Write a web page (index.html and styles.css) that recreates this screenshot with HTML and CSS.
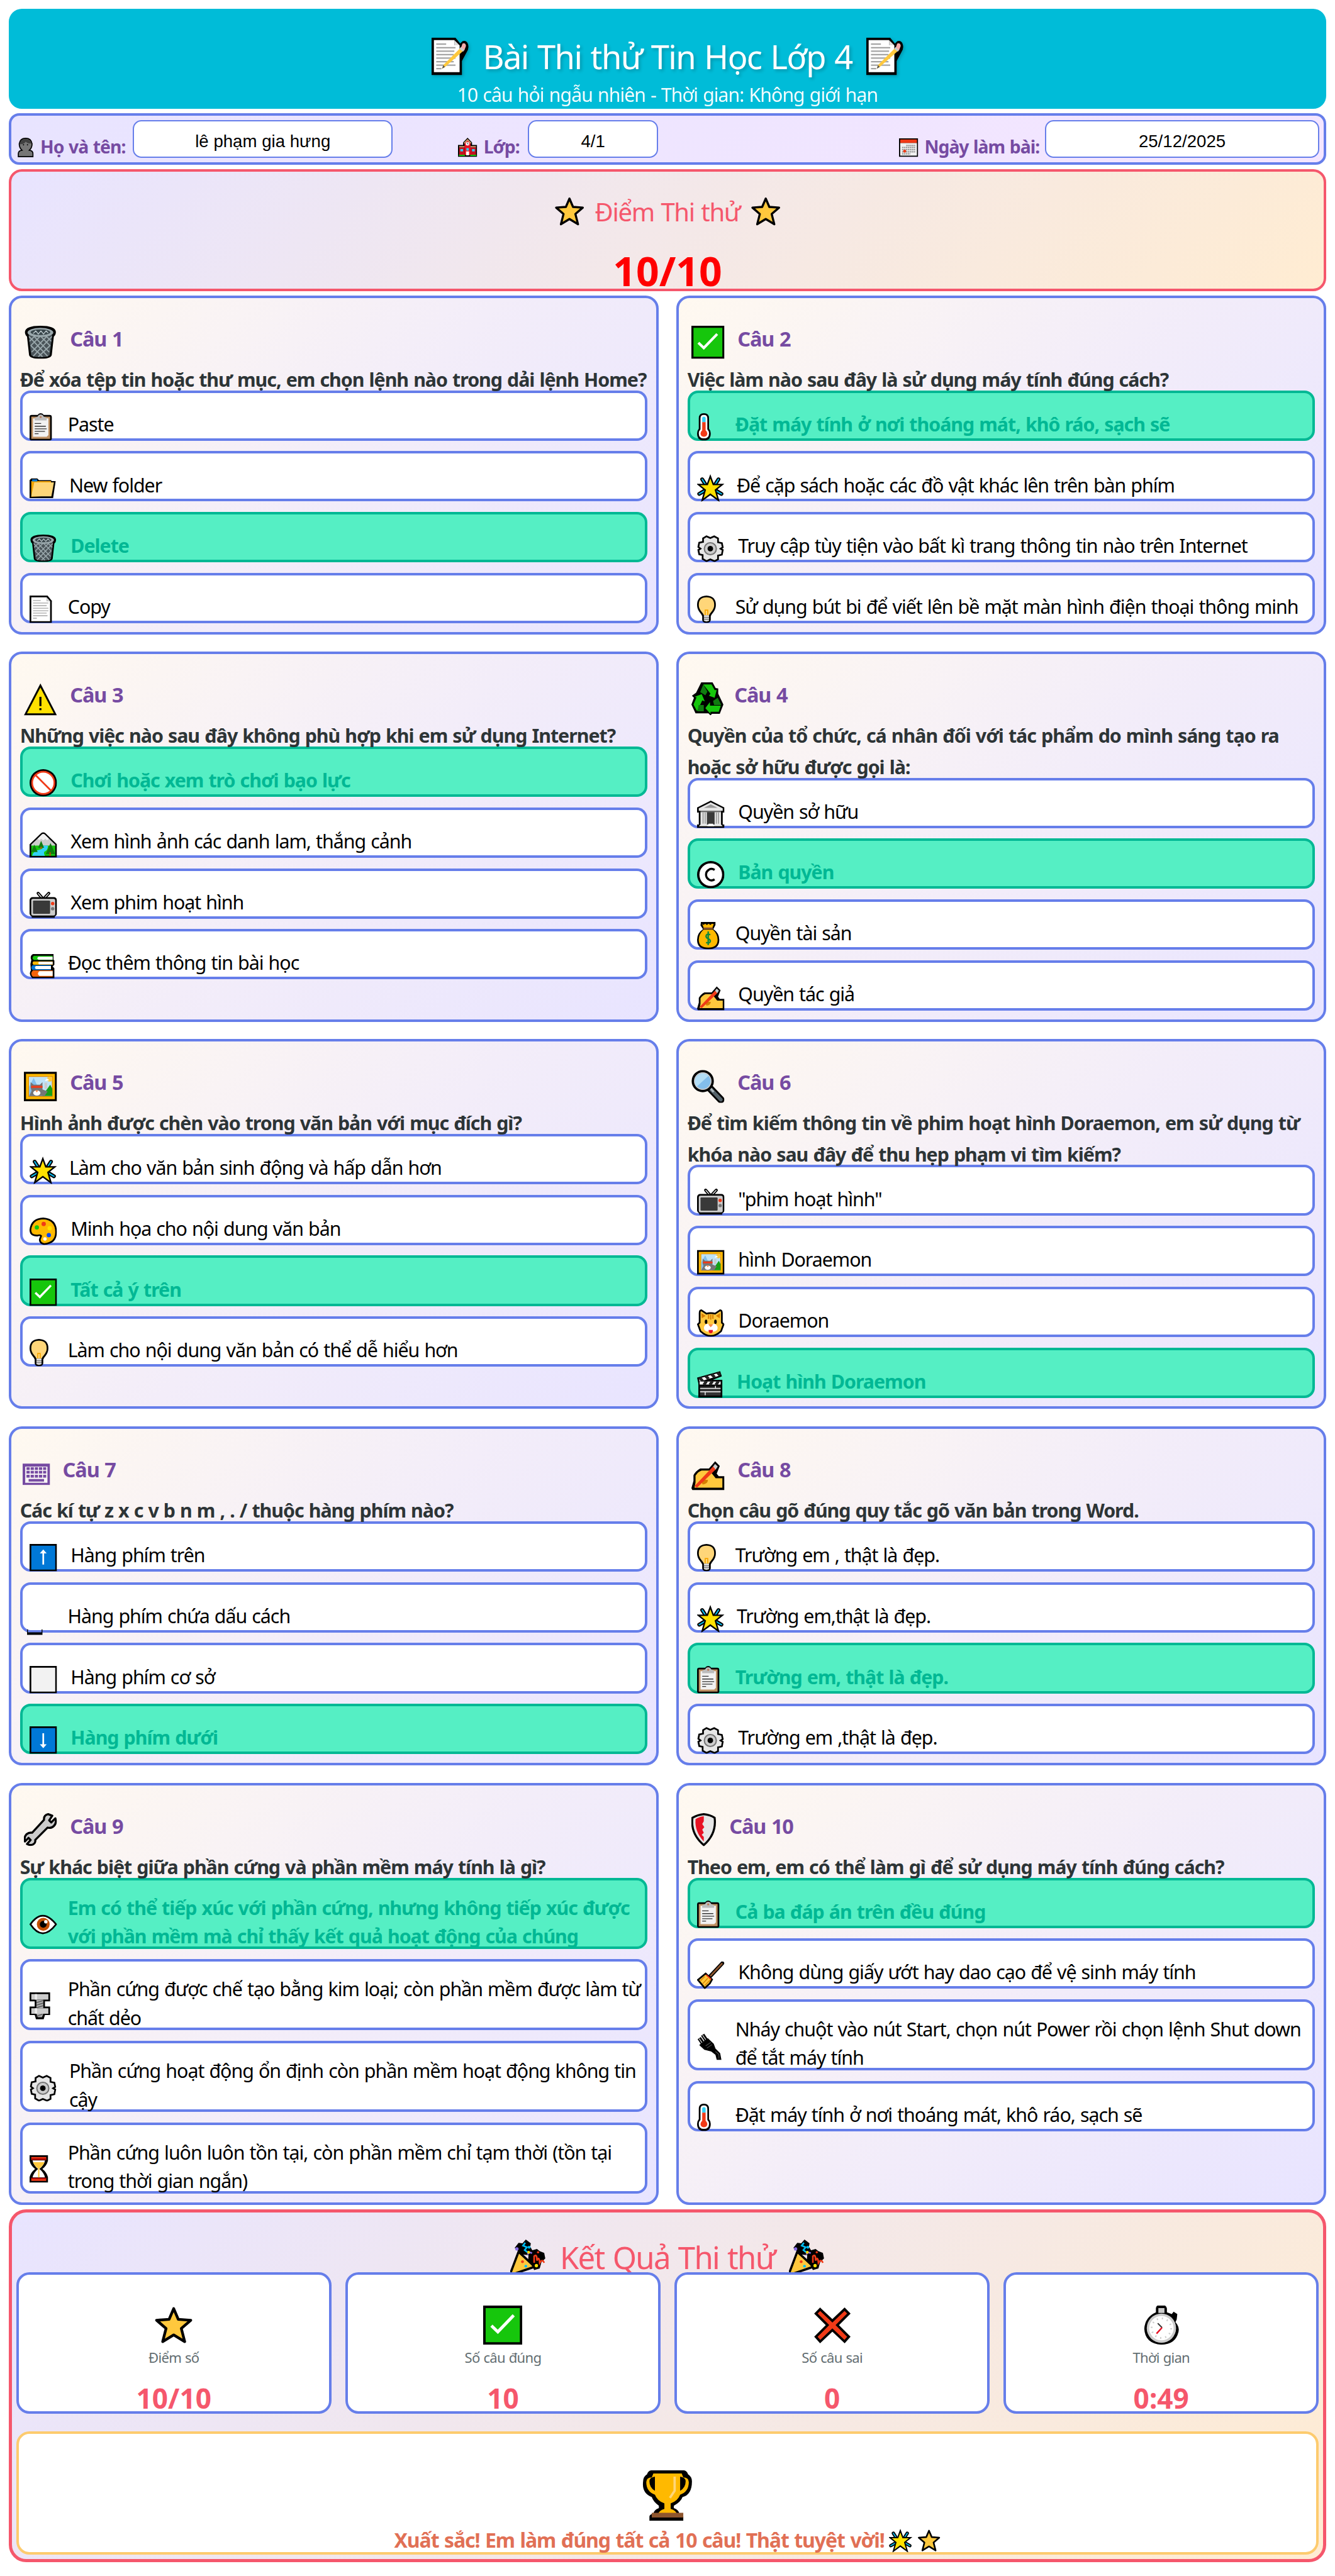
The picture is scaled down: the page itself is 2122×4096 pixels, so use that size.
FILE: index.html
```html
<!DOCTYPE html>
<html lang="vi">

<head>
  <meta charset="UTF-8" />
  <meta name="viewport" content="width=device-width, initial-scale=1.0" />
  <title>Bài Thi thử Tin Học Lớp 4</title>
  <link rel="stylesheet" href="styles.css">
</head>

<body>
  <!-- icon -->
  <svg class="sprite" aria-hidden="true">
    <symbol id="memo" viewBox="0 0 64 64">
      <path d="M0 0h41l8 10 4-4q6-2 9 4 3 8-2 15L52 40v24H0z" />
      <path d="M4 4h35v9h9v46H4z" fill="#fff" /><path d="M39 4l9 9h-9z" fill="#ddd" />
      <path d="M8 11h17M8 17h33M8 23h31M8 29h30M8 35h33M8 41h30M8 47h33M8 53h9" stroke="#a5a5a5" stroke-width="2.4" />
      <path d="M50 17l6 4-33 29-5 3 2-6z" fill="#ffc83d" /><path d="M18 53l2-6 3 3z" fill="#555" />
      <path d="M53 10q5-2 6 4l-3 8-6-4z" fill="#f4abab" /><path d="M50 16l6 5-2 3-6-5z" fill="#ccc" />
    </symbol>
    <symbol id="star" viewBox="0 0 64 64">
      <path d="M32 5l7.500 17.500L60 24 44.500 37.500 50 59 32 48 14 59l5.500-21.500L4 24l20.500-1.500z" fill="#ffc83d" stroke="#000" stroke-width="4.500" stroke-linejoin="round" />
    </symbol>
    <symbol id="person" viewBox="0 0 52 64">
      <path d="M2 62V52q0-9 12-11Q5 33 5 20 8 2 26 2t21 18q0 13-9 21 12 2 12 11v10z" fill="#767676" stroke="#000" stroke-width="3.500" />
      <path d="M7 21Q8 4 26 4q15 0 19 15-12 1-19-6-5 9-19 8z" fill="#404040" />
      <circle cx="19" cy="23" r="2" /><circle cx="32" cy="23" r="2" />
    </symbol>
    <symbol id="school" viewBox="0 0 64 64">
      <path d="M32 0l15 16v8h17v40H0V24h17v-8z" /><path d="M32 5l10 13v40H22V18z" fill="#e81224" />
      <path d="M32 4l13 13-3 3-10-10-10 10-3-3z" fill="#c89a6c" />
      <path d="M4 32h18v26H4zM42 32h18v26H42z" fill="#c50f1f" /><path d="M4 28h18v4H4zM42 28h18v4H42z" fill="#c89a6c" />
      <circle cx="32" cy="20" r="6" fill="#fff" /><path d="M32 16v5h3" fill="none" stroke="#000" stroke-width="1.500" />
      <path d="M8 38h9v8H8zM47 38h9v8h-9zM28 35h8v8h-8z" fill="#31d2f7" /><path d="M27 46h10v13H27z" fill="#fff" />
      <path d="M3 57h20v4H3zM41 57h20v4H41z" fill="#16c60c" />
    </symbol>
    <symbol id="calendar" viewBox="0 0 64 64">
      <path d="M0 2h64v62H0z" /><path d="M4 6h56v12H4z" fill="#f03a17" /><path d="M4 18h56v42H4z" fill="#f2f2f2" />
      <path d="M24 26h30M10 33h44M10 40h44M10 47h44M10 54h28" stroke="#999" stroke-width="4.500" stroke-dasharray="5 1.500" />
      <circle cx="19" cy="45" r="5" fill="#f03a17" />
    </symbol>
    <symbol id="trash" viewBox="0 0 64 64">
      <path d="M2 12Q3 0 32 0t30 12q0 6-4 9l-4 36q-2 7-22 7t-22-7L6 21q-4-3-4-9z" />
      <path d="M9 18l5 39q4 4 18 4t18-4l5-39z" fill="#4a5459" />
      <path d="M10 21l36 38M20 21l29 30M33 21l18 18M44 21l9 9M54 21L18 59M44 21L15 51M31 21L13 39M20 21L11 30M28 60l22-21M36 60L14 39" stroke="#9ba9ad" stroke-width="2.200" />
      <ellipse cx="32" cy="13" rx="25" ry="9" fill="#9ba9ad" /><ellipse cx="32" cy="12.500" rx="19" ry="5.500" fill="#39464b" />
      <path d="M18 15l5-5 5 6 5-6 5 6 5-6 4 4" fill="none" stroke="#c0cdd1" stroke-width="1.600" />
    </symbol>
    <symbol id="check" viewBox="0 0 64 64">
      <path d="M0 0h64v64H0z" /><path d="M4 4h56v56H4z" fill="#16c60c" />
      <path d="M13.500 33L24 43 50 16" fill="none" stroke="#fff" stroke-width="5" />
    </symbol>
    <symbol id="clipboard" viewBox="0 0 64 64">
      <path d="M5 4h14q2-4 7-4t7 4h14q5 0 5 5v50q0 5-5 5H5q-5 0-5-5V9q0-5 5-5z" /><path d="M4 8h44v52H4z" fill="#be9062" />
      <path d="M8 12h36v39l-4 4H8z" fill="#f2f2f2" />
      <path d="M12 17V11l7-3q2-5 7-5t7 5l7 3v6z" fill="#bcbcbc" /><circle cx="26" cy="9" r="2.500" fill="#b97a56" />
      <path d="M12 24h15M12 30.500h26M12 36.500h28M12 42.500h24M12 48h9" stroke="#333" stroke-width="2" />
    </symbol>
    <symbol id="folder" viewBox="0 0 64 64">
      <path d="M0 14l4-4h14l4 4h29v2h10l-6 40H0z" /><path d="M4 16h46v34L4 53z" fill="#f5a500" />
      <path d="M6 12h12v5H6z" fill="#0078d7" /><path d="M11 19h46l-6 33H4z" fill="#ffd679" />
    </symbol>
    <symbol id="page" viewBox="0 0 64 64">
      <path d="M0 0h42l10 12v52H0z" /><path d="M4 4h36v9h8v47H4z" fill="#fff" /><path d="M40 4l8 9h-8z" fill="#ddd" />
      <path d="M8 11.500h18M8 17.500h36M8 23.500h32M8 29.500h36M8 35.500h36M8 41h32M8 47h34M8 53h9" stroke="#a5a5a5" stroke-width="2" />
    </symbol>
    <symbol id="thermometer" viewBox="0 0 64 64">
      <path d="M4 12Q4 0 16 0t12 12v24q4 5 4 11 0 17-16 17T0 47q0-6 4-11z" />
      <path d="M8 12q0-8 8-8t8 8v26q4 4 4 9 0 12-12 12T4 47q0-5 4-9z" fill="#fff" />
      <path d="M12 21V12q0-4 4-4t4 4v9z" fill="#31d2f7" /><path d="M12 21h8v19q4 3 4 7 0 8-8 8t-8-8q0-4 4-7z" fill="#f03a17" />
    </symbol>
    <symbol id="glow" viewBox="0 0 64 64">
      <path d="M12 12l9 14M50 12l-9 14M5 46l12-7M57 46l-12-7" stroke="#000" stroke-width="9" stroke-linecap="round" />
      <path d="M12 12l9 14M50 12l-9 14M5 46l12-7M57 46l-12-7" stroke="#00bcf2" stroke-width="3" stroke-linecap="round" />
      <path d="M31 5l7 19h21L43 37l7 24-19-14-19 14 7-24L3 24h21z" fill="#ffe100" stroke="#000" stroke-width="3.500" />
    </symbol>
    <symbol id="gear" viewBox="0 0 64 64">
      <path d="M22 4l9 4 9-4 9 5v9l9 2 2 10-5 3 5 3-2 11-9 2v9l-8 4-10-4-9 4-9-5v-9l-8-2-2-10 5-3-5-4 2-10 9-2V9z" fill="#e6e6e6" stroke="#000" stroke-width="4" />
      <circle cx="31" cy="33" r="14" fill="#ccc" stroke="#767676" stroke-width="3" /><circle cx="31" cy="33" r="6.500" />
    </symbol>
    <symbol id="bulb" viewBox="0 0 64 64">
      <path d="M22 0q22 1 22 22 0 9-6 17-5 6-6 9v9q-1 7-10 7t-10-7v-9q-1-3-6-9-6-8-6-17Q0 1 22 0z" />
      <path d="M22 4q18 0 18 18 0 8-6 15-5 6-6 9H16q-1-3-6-9-6-7-6-15Q4 4 22 4z" fill="#ffd679" />
      <path d="M19 46V34h6v12" fill="none" stroke="#f7a500" stroke-width="2.500" />
      <path d="M16 46h12v13q-6 3-12 0z" fill="#ddd" /><path d="M16 51h12M16 55.500h12" stroke="#555" stroke-width="1.600" />
    </symbol>
    <symbol id="warning" viewBox="0 0 64 64">
      <path d="M32 2l32 62H0z" /><path d="M32 10l26 50H6z" fill="#ffe100" /><path d="M32 28v18M32 50v4" stroke="#000" stroke-width="4" />
    </symbol>
    <symbol id="recycle" viewBox="0 0 64 64">
      <path d="M19 0h22l6 11 5 1v10l10 21-7 18H40l-3 3-4-4H8L0 43l5-13-4-4 8-6z" />
      <path d="M23 4h16l6 11h4l-4 15-11-4 3-4z" fill="#16c60c" /><path d="M23 4l8 14-4 7-10-6z" fill="#107c10" />
      <path d="M6 28l14-5 6 14-5-2-10 21L4 43l6-14z" fill="#16c60c" /><path d="M14 44h10v12H12z" fill="#107c10" />
      <path d="M27 50l9-12v7h21l-4 12H37v4z" fill="#16c60c" /><path d="M42 36l9-6 7 14H44z" fill="#107c10" />
    </symbol>
    <symbol id="ban" viewBox="0 0 64 64">
      <circle cx="32" cy="32" r="32" /><circle cx="32" cy="32" r="26" fill="#fff" stroke="#f03a17" stroke-width="4" />
      <path d="M14 14l36 36" stroke="#f03a17" stroke-width="4" />
    </symbol>
    <symbol id="landscape" viewBox="0 0 64 64">
      <path d="M0 33L27 7q5-4 10 0l27 26v31H0z" /><path d="M4 34L29 10q3-2 6 0l25 24v3H4z" fill="#ccc" />
      <path d="M19 20L29 10q3-2 6 0l10 10-4 4-4-4-5 4-5-4-4 4z" fill="#f2f2f2" />
      <path d="M4 36h56v24H4z" fill="#16c60c" /><path d="M6 60q3-12 17-14 12-3 8-10h12q0 11-8 14-3 3 1 10z" fill="#31d2f7" />
      <path d="M11 34l8 17H4zM27 25l7 16H20zM49 30l11 26H38z" fill="#107c10" /><path d="M48 52v8M27 39v5" stroke="#c24e00" stroke-width="3" />
    </symbol>
    <symbol id="tv" viewBox="0 0 64 64">
      <path d="M20 5l12 14L45 5" fill="none" stroke="#000" stroke-width="7" stroke-linecap="round" /><path d="M20 5l12 14L45 5" fill="none" stroke="#fff" stroke-width="2" />
      <rect y="14" width="64" height="45" rx="7" /><path d="M5 54h54v8H5z" /><rect x="4" y="18" width="56" height="39" rx="4" fill="#ccc" />
      <rect x="8" y="22" width="40" height="31" rx="2" fill="#393939" /><circle cx="54" cy="29" r="4" fill="#f03a17" /><circle cx="54" cy="41" r="4" fill="#767676" />
    </symbol>
    <symbol id="books" viewBox="0 0 64 64">
      <path d="M8 6h48v13l2 2v10l-4 4 4 4v23H6Q-3 53 3 44l-1-15 2-9Q0 10 8 6z" />
      <path d="M54 10v10H10q-6-5 0-10z" fill="#16c60c" /><path d="M54 12v7H21q-6-3 0-7z" fill="#fff" />
      <path d="M54 23v8H9q-4-4 0-8z" fill="#ffb900" /><path d="M54 24v6H22q-3-3 0-6z" fill="#fff" />
      <path d="M50 32v11H7q-6-5 0-11z" fill="#0078d7" /><path d="M50 34v7H15q-5-3 0-7z" fill="#fff" />
      <path d="M54 44v15H8q-8-7 0-15z" fill="#f7630c" /><path d="M54 46v11H23q-7-5 0-11z" fill="#fff" />
    </symbol>
    <symbol id="bank" viewBox="0 0 64 64">
      <path d="M0 16L32 0l32 16v12h-4v28h4v8H0v-8h4V28H0z" /><path d="M4 18L32 4l28 14v6H4z" fill="#e6e6e6" /><path d="M16 17l16-8 16 8z" fill="#999" />
      <path d="M8 27h48v29l4 4H4l4-4z" fill="#e6e6e6" /><path d="M23 27h18v29H23z" fill="#393939" /><path d="M8 25h48M14 28v26M19 28v26M45 28v26M50 28v26" stroke="#888" stroke-width="2" />
      <path d="M27 54h10l3 6H24z" fill="#fff" />
    </symbol>
    <symbol id="copyright" viewBox="0 0 64 64">
      <circle cx="32" cy="32" r="32" /><circle cx="32" cy="32" r="26.500" fill="#fff" />
      <path d="M41 21q-8-5-14 0-6 4-6 11t6 11q6 5 14 0" fill="none" stroke="#000" stroke-width="5" />
    </symbol>
    <symbol id="money" viewBox="0 0 64 64">
      <path d="M9 0h34v7l-5 10q14 9 14 25 0 22-26 22T0 42q0-16 14-25L8 8z" /><path d="M12 4l3 3 4-3 4 3 4-3 4 3 4-3 4 1-4 10H16z" fill="#ffb900" />
      <path d="M15 15h22" stroke="#8e562e" stroke-width="4" /><path d="M15 18h22q11 10 11 24 0 18-22 18T4 42q0-14 11-24z" fill="#ffb900" />
      <path d="M31 30q-9-4-10 3 0 4 5 6t5 6q-1 6-10 3M26 22v32" fill="none" stroke="#10893e" stroke-width="3.500" />
    </symbol>
    <symbol id="hand" viewBox="0 0 64 64">
      <path d="M46 8l9 9-6 15 4 5h11v27H2l-2-4 4-14V35q4-8 13-13h17z" /><path d="M8 36q5-8 12-10h15l12 15h13v18H6l2-10z" fill="#ffc83d" />
      <path d="M17 44h15q0 8-10 9z" fill="#d67f00" /><path d="M42 18l6 5L11 59l-5-3z" fill="#f03a17" /><path d="M46 13l5 5-4 6-5-6z" fill="#ccc" />
    </symbol>
    <symbol id="picture" viewBox="0 0 64 64">
      <path d="M0 4h64v57H0z" /><path d="M4 8h56v49H4z" fill="#ffb900" /><path d="M9 13h46v39H9z" fill="#bfe3f7" stroke="#e08a00" stroke-width="1.500" />
      <path d="M10 33l9-17 8 17v18H10z" fill="#83beec" /><path d="M36 50l15-21 4 8v14H36z" fill="#16a016" />
      <circle cx="50" cy="18" r="5" fill="#ffc83d" /><path d="M41 22q3-8 8-2z" fill="#fff" /><path d="M40 25h5v12h-5z" fill="#ccc" />
      <path d="M13 24l6 5h12l5-5v14l10 4-6 9H10l5-10-2-6z" fill="#767676" /><path d="M14 31h22v4H14z" fill="#f03a17" />
      <ellipse cx="25" cy="45" rx="7" ry="5" fill="#fff" /><path d="M22 40h6l-3 4z" fill="#f7894a" />
    </symbol>
    <symbol id="palette" viewBox="0 0 64 64">
      <path d="M32 2q30 2 30 32 0 26-28 28-11-3-10-11l3-8q-2-3-8-1Q1 43 2 28 5 3 32 2z" fill="#ffb900" stroke="#000" stroke-width="4" />
      <circle cx="33" cy="15" r="5" fill="#f03a17" /><circle cx="17" cy="23" r="5" fill="#16c60c" /><circle cx="47" cy="25" r="5" fill="#ffe100" />
      <circle cx="45" cy="41" r="5" fill="#0046ff" /><circle cx="36" cy="50" r="4" fill="#fff" />
    </symbol>
    <symbol id="magnifier" viewBox="0 0 64 64">
      <path d="M36 36l21 22" stroke="#000" stroke-width="14" stroke-linecap="round" /><path d="M38 38l19 20" stroke="#55636a" stroke-width="7" stroke-linecap="round" /><path d="M37 36l6 7" stroke="#aeb9bd" stroke-width="4" />
      <circle cx="22" cy="22" r="19" fill="#83beec" stroke="#000" stroke-width="5" /><circle cx="22" cy="22" r="16" fill="none" stroke="#ccc" stroke-width="2" /><path d="M10 33Q2 17 15 9q10-5 18 3z" fill="#b3def6" />
    </symbol>
    <symbol id="cat" viewBox="0 0 64 64">
      <path d="M10 2l12 8q10-3 20 0L54 2q4 0 4 7v22l4 4-6 16Q44 62 32 62T8 51L2 35l4-4V9q0-7 4-7z" fill="#ffc83d" stroke="#000" stroke-width="4" />
      <path d="M10 9l10 6-9 6zM54 9l-10 6 9 6z" fill="#d67f00" /><path d="M27 12v10M32 12v12M37 12v10" stroke="#d67f00" stroke-width="3" />
      <ellipse cx="21" cy="29" rx="3" ry="5" /><ellipse cx="43" cy="29" rx="3" ry="5" /><circle cx="25" cy="43" r="9" fill="#fff" /><circle cx="39" cy="43" r="9" fill="#fff" />
      <path d="M26 35h12l-6 7z" fill="#f7894a" /><path d="M27 48h10q0 8-5 8t-5-8z" fill="#e81224" />
    </symbol>
    <symbol id="clapper" viewBox="0 0 64 64">
      <path d="M0 17L54 2l4 12-21 8h22v42H3V30z" /><path d="M4 19l47-13 2 6L6 26z" fill="#fff" /><path d="M6 17l7 8M20 13l7 7M34 9l7 7M48 5l6 7" stroke="#222" stroke-width="7" />
      <path d="M6 26h49v7H6z" fill="#fff" /><path d="M22 25l-6 9M36 25l-6 9M50 25l-6 9" stroke="#222" stroke-width="7" />
      <path d="M7 38h48v21H7z" fill="#333" /><path d="M7 42h48M7 50h48M43 36v6M19 50v8" stroke="#fff" stroke-width="2" />
    </symbol>
    <symbol id="keyboard" viewBox="0 0 64 50">
      <path d="M0 0h64v50H0z" /><path d="M6 7h52v38H6z" fill="#f9f5f5" />
      <path d="M9 11.500h46M9 20h46M9 29.500h46" stroke="#764ba2" stroke-width="6.500" stroke-dasharray="7.500 2.200" /><path d="M14 36h36v6H14z" />
    </symbol>
    <symbol id="up" viewBox="0 0 64 64">
      <path d="M0 0h64v64H0z" /><path d="M4 4h56v56H4z" fill="#0078d7" /><path d="M32 48V20" stroke="#fff" stroke-width="4" /><path d="M32 13l8 9H24z" fill="#fff" />
    </symbol>
    <symbol id="down" viewBox="0 0 64 64">
      <path d="M0 0h64v64H0z" /><path d="M4 4h56v56H4z" fill="#0078d7" /><path d="M32 16v28" stroke="#fff" stroke-width="4" /><path d="M32 51l8-9H24z" fill="#fff" />
    </symbol>
    <symbol id="square" viewBox="0 0 64 64">
      <path d="M0 0h64v64H0z" /><path d="M4 4h56v56H4z" fill="#f2f2f2" />
    </symbol>
    <symbol id="space" viewBox="0 0 64 72">
      <path d="M0 57h2v7h32v-7h2v13H0z" />
    </symbol>
    <symbol id="wrench" viewBox="0 0 64 64">
      <path d="M47 2l8 3-6 9 4 4 8-8q3 9-3 15-5 5-12 3L22 52q1 6-5 9-6 2-11-1l7-8-4-4-7 7q-2-9 3-14 5-4 11-3l23-25q-1-9 8-11z" fill="#ccc" stroke="#000" stroke-width="4" stroke-linejoin="round" />
    </symbol>
    <symbol id="shield" viewBox="0 0 64 64">
      <path d="M24 2q12 1 21 7 4 31-21 53Q-2 40 2 9q10-6 22-7z" fill="#e6e6e6" stroke="#000" stroke-width="4" />
      <path d="M24 6Q14 7 8 12q-2 24 16 43V46l-4-4 4-4-3-6 4-5-4-6 3-5z" fill="#e81224" />
    </symbol>
    <symbol id="eye" viewBox="0 0 64 64">
      <path d="M2 32Q16 12 31 12t31 20Q46 53 31 53T2 32z" fill="#fff" stroke="#000" stroke-width="4" /><circle cx="32" cy="32" r="15" fill="#c24e00" /><circle cx="32" cy="32" r="8" /><circle cx="38" cy="26" r="4" fill="#fff" />
    </symbol>
    <symbol id="bolt" viewBox="0 0 64 64">
      <path d="M0 0h48v21H36v12h12v20H36l-3 10H15l-3-10H0V33h12V21H0z" /><path d="M4 4h40v13H4zM4 37h40v13H4z" fill="#ccc" /><path d="M16 17h16v20H16zM16 50h16l-3 8H19z" fill="#aaa" />
      <path d="M16 24l16-5M16 30l16-5M16 36l16-5M16 56l14-5" stroke="#555" stroke-width="2" /><path d="M15 4v13M15 37v13" stroke="#eee" stroke-width="5" />
    </symbol>
    <symbol id="hourglass" viewBox="0 0 64 64">
      <path d="M0 0h43v13q-3 12-13 19 10 8 13 19v13H0V51q3-11 13-19Q3 25 0 13z" /><path d="M7 12h29q-2 11-13 20 11 9 13 20H7q2-11 13-20Q9 23 7 12z" fill="#fff" />
      <path d="M8 16h27q-3 8-12 15v21h-3V31Q11 24 8 16z" fill="#ffc83d" /><path d="M4 4h35v7H4zM4 53h35v7H4z" fill="#f03a17" /><path d="M4 9h35M4 54h35" stroke="#a80000" stroke-width="3" />
    </symbol>
    <symbol id="broom" viewBox="0 0 64 64">
      <path d="M59 4L31 34" stroke="#000" stroke-width="9" stroke-linecap="round" /><path d="M59 4L31 34" stroke="#8e562e" stroke-width="4" />
      <path d="M20 28l15 14-5 9-12 11L2 43z" fill="#ffc83d" stroke="#000" stroke-width="4" /><path d="M21 31l12 11" stroke="#f03a17" stroke-width="3" /><path d="M18 35L8 45M25 39L13 52M31 43L18 56" stroke="#d67f00" stroke-width="2" />
    </symbol>
    <symbol id="plug" viewBox="0 0 64 64">
      <path d="M13 5l10 15M5 13l9 13" stroke="#000" stroke-width="9" /><path d="M13 6l9 13M5 14l9 13" stroke="#ccc" stroke-width="2" />
      <path d="M5 29l20-16 14 13 4 11 11 11 3 16H46l-3-12-10-8-16-4z" /><path d="M20 31l12-8M23 36l12-8M43 44l8 7v10" fill="none" stroke="#444" stroke-width="2" />
    </symbol>
    <symbol id="popper" viewBox="0 0 64 64">
      <path d="M15 23l29 27L3 64l-2-4z" fill="#ffc83d" stroke="#000" stroke-width="4" stroke-linejoin="round" />
      <path d="M8 16l7-9 7 1 6-7 9 7-1 6 4 7-7 8-12-1zM33 28l5-7 10-3 5 4 8 3 2 10-7 7-3 11-10 3-5-10-6-6z" />
      <path d="M27 7l-4 5 7 3-4 5 5 4" stroke="#00bcf2" stroke-width="3" fill="none" /><path d="M43 43V31q5-5 5 8 4-9 5 4 5-8 8 0" stroke="#f03a17" stroke-width="3" fill="none" />
      <path d="M31 28q4-6 8-2" stroke="#886ce4" stroke-width="3" fill="none" /><circle cx="12" cy="18" r="3" fill="#886ce4" /><circle cx="34" cy="15" r="2.500" fill="#00bcf2" /><circle cx="33" cy="24" r="2.500" fill="#ffe100" />
      <circle cx="47" cy="48" r="3" fill="#ffe100" /><circle cx="22" cy="41" r="2.500" fill="#f03a17" /><circle cx="28" cy="49" r="2.500" fill="#00bcf2" /><circle cx="50" cy="24" r="2" fill="#f03a17" />
    </symbol>
    <symbol id="cross" viewBox="0 0 64 64">
      <path d="M12 6l20 19L52 6l7 7-19 19 19 19-7 8-20-19-20 19-7-8 19-19L5 13z" fill="#f03a17" stroke="#000" stroke-width="4" />
    </symbol>
    <symbol id="stopwatch" viewBox="0 0 64 64">
      <path d="M26 0h12q3 2 3 5v6l8 3 3-4 6 4-1 9-2 4q7 8 5 16-5 21-28 21Q5 62 4 38q1-19 19-27V4q1-4 3-4z" />
      <path d="M27 4h10v8H27z" fill="#ccc" /><circle cx="32" cy="37" r="24" fill="#ccc" /><circle cx="32" cy="37" r="20" fill="#fff" />
      <circle cx="32" cy="37" r="16" fill="none" stroke="#ccc" stroke-width="3" stroke-dasharray="2 6.400" />
      <path d="M26 29l7 7" stroke="#333" stroke-width="2" /><path d="M33 36l-9 10" stroke="#e81224" stroke-width="2.500" />
    </symbol>
    <symbol id="trophy" viewBox="0 0 64 64">
      <path d="M11 0h42q4 1 5 5 5 3 5 9 0 17-12 20-2 6-11 11v3q6 2 7 7 5 1 5 4v5H9v-5q0-3 5-4 1-5 7-7v-3Q14 40 12 34-1 29 1 14q0-6 5-9 1-4 5-5z" />
      <path d="M14 4h36l2 5q7 0 7 6 0 12-11 16-3 8-12 11v7q7 2 8 7H20q1-5 8-7v-7q-9-3-12-11Q5 27 5 15q0-6 7-6z" fill="#ffb900" />
      <path d="M16 8v18Q9 22 9 14q0-5 7-6zM48 8v18q7-4 7-12 0-5-7-6z" /><path d="M41 8v18l-6 9" fill="none" stroke="#ffd679" stroke-width="3" /><path d="M12 54h40v6H12z" fill="#8e562e" />
    </symbol>
  </svg>

  <header class="header">
    <h1>
      <svg class="icon icon-title"><use href="#memo" /></svg>
      <span>Bài Thi thử Tin Học Lớp 4</span>
      <svg class="icon icon-title"><use href="#memo" /></svg>
    </h1>
    <p>10 câu hỏi ngẫu nhiên - Thời gian: Không giới hạn</p>
  </header>

  <div class="student-info">
    <div class="info-item">
      <label class="label-name"><svg class="icon icon-label icon-person"><use href="#person" /></svg><span>Họ và tên:</span></label>
      <input class="input-name" type="text" value="lê phạm gia hưng">
    </div>
    <div class="info-item info-class">
      <label class="label-class"><svg class="icon icon-label"><use href="#school" /></svg><span>Lớp:</span></label>
      <input class="input-class" type="text" value="4/1">
    </div>
    <div class="info-item info-date">
      <label class="label-date"><svg class="icon icon-label"><use href="#calendar" /></svg><span>Ngày làm bài:</span></label>
      <input class="input-date" type="text" value="25/12/2025">
    </div>
  </div>

  <div class="score-box">
    <h2><svg class="icon icon-star"><use href="#star" /></svg><span>Điểm Thi thử</span><svg class="icon icon-star"><use href="#star" /></svg></h2>
    <div class="score">10/10</div>
  </div>

  <div class="questions">
    <div class="question">
      <div class="question-number"><svg class="icon icon-q"><use href="#trash" /></svg><span>Câu 1</span></div>
      <p class="question-text">Để xóa tệp tin hoặc thư mục, em chọn lệnh nào trong dải lệnh Home?</p>
      <div class="option"><svg class="icon icon-o narrow"><use href="#clipboard" /></svg><span>Paste</span></div>
      <div class="option"><svg class="icon icon-o mid"><use href="#folder" /></svg><span>New folder</span></div>
      <div class="option correct"><svg class="icon icon-o"><use href="#trash" /></svg><span>Delete</span></div>
      <div class="option"><svg class="icon icon-o narrow"><use href="#page" /></svg><span>Copy</span></div>
    </div>

    <div class="question">
      <div class="question-number"><svg class="icon icon-q"><use href="#check" /></svg><span>Câu 2</span></div>
      <p class="question-text">Việc làm nào sau đây là sử dụng máy tính đúng cách?</p>
      <div class="option correct"><svg class="icon icon-o narrow"><use href="#thermometer" /></svg><span>Đặt máy tính ở nơi thoáng mát, khô ráo, sạch sẽ</span></div>
      <div class="option"><svg class="icon icon-o mid"><use href="#glow" /></svg><span>Để cặp sách hoặc các đồ vật khác lên trên bàn phím</span></div>
      <div class="option"><svg class="icon icon-o"><use href="#gear" /></svg><span>Truy cập tùy tiện vào bất kì trang thông tin nào trên Internet</span></div>
      <div class="option"><svg class="icon icon-o narrow"><use href="#bulb" /></svg><span>Sử dụng bút bi để viết lên bề mặt màn hình điện thoại thông minh</span></div>
    </div>

    <div class="question">
      <div class="question-number"><svg class="icon icon-q"><use href="#warning" /></svg><span>Câu 3</span></div>
      <p class="question-text">Những việc nào sau đây không phù hợp khi em sử dụng Internet?</p>
      <div class="option correct"><svg class="icon icon-o"><use href="#ban" /></svg><span>Chơi hoặc xem trò chơi bạo lực</span></div>
      <div class="option"><svg class="icon icon-o"><use href="#landscape" /></svg><span>Xem hình ảnh các danh lam, thắng cảnh</span></div>
      <div class="option"><svg class="icon icon-o"><use href="#tv" /></svg><span>Xem phim hoạt hình</span></div>
      <div class="option"><svg class="icon icon-o narrow"><use href="#books" /></svg><span>Đọc thêm thông tin bài học</span></div>
    </div>

    <div class="question">
      <div class="question-number"><svg class="icon icon-q q-recycle"><use href="#recycle" /></svg><span>Câu 4</span></div>
      <p class="question-text">Quyền của tổ chức, cá nhân đối với tác phẩm do mình sáng tạo ra<br>hoặc sở hữu được gọi là:</p>
      <div class="option"><svg class="icon icon-o"><use href="#bank" /></svg><span>Quyền sở hữu</span></div>
      <div class="option correct"><svg class="icon icon-o"><use href="#copyright" /></svg><span>Bản quyền</span></div>
      <div class="option"><svg class="icon icon-o narrow"><use href="#money" /></svg><span>Quyền tài sản</span></div>
      <div class="option"><svg class="icon icon-o"><use href="#hand" /></svg><span>Quyền tác giả</span></div>
    </div>

    <div class="question">
      <div class="question-number"><svg class="icon icon-q"><use href="#picture" /></svg><span>Câu 5</span></div>
      <p class="question-text">Hình ảnh được chèn vào trong văn bản với mục đích gì?</p>
      <div class="option"><svg class="icon icon-o mid"><use href="#glow" /></svg><span>Làm cho văn bản sinh động và hấp dẫn hơn</span></div>
      <div class="option"><svg class="icon icon-o"><use href="#palette" /></svg><span>Minh họa cho nội dung văn bản</span></div>
      <div class="option correct"><svg class="icon icon-o"><use href="#check" /></svg><span>Tất cả ý trên</span></div>
      <div class="option"><svg class="icon icon-o narrow"><use href="#bulb" /></svg><span>Làm cho nội dung văn bản có thể dễ hiểu hơn</span></div>
    </div>

    <div class="question">
      <div class="question-number"><svg class="icon icon-q"><use href="#magnifier" /></svg><span>Câu 6</span></div>
      <p class="question-text">Để tìm kiếm thông tin về phim hoạt hình Doraemon, em sử dụng từ<br>khóa nào sau đây để thu hẹp phạm vi tìm kiếm?</p>
      <div class="option"><svg class="icon icon-o"><use href="#tv" /></svg><span>"phim hoạt hình"</span></div>
      <div class="option"><svg class="icon icon-o"><use href="#picture" /></svg><span>hình Doraemon</span></div>
      <div class="option"><svg class="icon icon-o"><use href="#cat" /></svg><span>Doraemon</span></div>
      <div class="option correct"><svg class="icon icon-o mid"><use href="#clapper" /></svg><span>Hoạt hình Doraemon</span></div>
    </div>

    <div class="question">
      <div class="question-number"><svg class="icon icon-keyboard"><use href="#keyboard" /></svg><span>Câu 7</span></div>
      <p class="question-text">Các kí tự z x c v b n m , . / thuộc hàng phím nào?</p>
      <div class="option"><svg class="icon icon-o"><use href="#up" /></svg><span>Hàng phím trên</span></div>
      <div class="option"><svg class="icon icon-o icon-space"><use href="#space" /></svg><span>Hàng phím chứa dấu cách</span></div>
      <div class="option"><svg class="icon icon-o"><use href="#square" /></svg><span>Hàng phím cơ sở</span></div>
      <div class="option correct"><svg class="icon icon-o"><use href="#down" /></svg><span>Hàng phím dưới</span></div>
    </div>

    <div class="question">
      <div class="question-number"><svg class="icon icon-q"><use href="#hand" /></svg><span>Câu 8</span></div>
      <p class="question-text">Chọn câu gõ đúng quy tắc gõ văn bản trong Word.</p>
      <div class="option"><svg class="icon icon-o narrow"><use href="#bulb" /></svg><span>Trường em , thật là đẹp.</span></div>
      <div class="option"><svg class="icon icon-o mid"><use href="#glow" /></svg><span>Trường em,thật là đẹp.</span></div>
      <div class="option correct"><svg class="icon icon-o narrow"><use href="#clipboard" /></svg><span>Trường em, thật là đẹp.</span></div>
      <div class="option"><svg class="icon icon-o"><use href="#gear" /></svg><span>Trường em ,thật là đẹp.</span></div>
    </div>

    <div class="question">
      <div class="question-number"><svg class="icon icon-q"><use href="#wrench" /></svg><span>Câu 9</span></div>
      <p class="question-text">Sự khác biệt giữa phần cứng và phần mềm máy tính là gì?</p>
      <div class="option two-line correct"><svg class="icon icon-o narrow"><use href="#eye" /></svg><span>Em có thể tiếp xúc với phần cứng, nhưng không tiếp xúc được<br>với phần mềm mà chỉ thấy kết quả hoạt động của chúng</span></div>
      <div class="option two-line"><svg class="icon icon-o narrow"><use href="#bolt" /></svg><span>Phần cứng được chế tạo bằng kim loại; còn phần mềm được làm từ<br>chất dẻo</span></div>
      <div class="option two-line"><svg class="icon icon-o mid"><use href="#gear" /></svg><span>Phần cứng hoạt động ổn định còn phần mềm hoạt động không tin<br>cậy</span></div>
      <div class="option two-line"><svg class="icon icon-o narrow"><use href="#hourglass" /></svg><span>Phần cứng luôn luôn tồn tại, còn phần mềm chỉ tạm thời (tồn tại<br>trong thời gian ngắn)</span></div>
    </div>

    <div class="question">
      <div class="question-number"><svg class="icon icon-q q-shield"><use href="#shield" /></svg><span>Câu 10</span></div>
      <p class="question-text">Theo em, em có thể làm gì để sử dụng máy tính đúng cách?</p>
      <div class="option correct"><svg class="icon icon-o narrow"><use href="#clipboard" /></svg><span>Cả ba đáp án trên đều đúng</span></div>
      <div class="option"><svg class="icon icon-o"><use href="#broom" /></svg><span>Không dùng giấy ướt hay dao cạo để vệ sinh máy tính</span></div>
      <div class="option two-line"><svg class="icon icon-o narrow"><use href="#plug" /></svg><span>Nháy chuột vào nút Start, chọn nút Power rồi chọn lệnh Shut down<br>để tắt máy tính</span></div>
      <div class="option"><svg class="icon icon-o narrow"><use href="#thermometer" /></svg><span>Đặt máy tính ở nơi thoáng mát, khô ráo, sạch sẽ</span></div>
    </div>
  </div>

  <div class="result">
    <h2><svg class="icon icon-popper"><use href="#popper" /></svg><span>Kết Quả Thi thử</span><svg class="icon icon-popper"><use href="#popper" /></svg></h2>
    <div class="stats">
      <div class="stat">
        <svg class="icon icon-stat"><use href="#star" /></svg>
        <div class="stat-label">Điểm số</div>
        <div class="stat-value">10/10</div>
      </div>
      <div class="stat">
        <svg class="icon icon-stat"><use href="#check" /></svg>
        <div class="stat-label">Số câu đúng</div>
        <div class="stat-value">10</div>
      </div>
      <div class="stat">
        <svg class="icon icon-stat"><use href="#cross" /></svg>
        <div class="stat-label">Số câu sai</div>
        <div class="stat-value">0</div>
      </div>
      <div class="stat">
        <svg class="icon icon-stat"><use href="#stopwatch" /></svg>
        <div class="stat-label">Thời gian</div>
        <div class="stat-value">0:49</div>
      </div>
    </div>
    <div class="message">
      <svg class="icon icon-trophy"><use href="#trophy" /></svg>
      <p><span>Xuất sắc! Em làm đúng tất cả 10 câu! Thật tuyệt vời!</span><svg class="icon icon-msg"><use href="#glow" /></svg><svg class="icon icon-msg"><use href="#star" /></svg></p>
    </div>
  </div>
</body>

</html>
```
FILE: styles.css
```css
* {
  margin: 0;
  padding: 0;
  box-sizing: border-box;
}

html {
  font-size: 13.815px;
}

body {
  padding: 1rem;
  background: #fff;
  font-family: "Noto Sans", "Open Sans", sans-serif;
  color: #000;
}

h1, h2, p, label, .option, .question-number, .stat-label {
  letter-spacing: -0.034em;
  word-spacing: 0.04em;
}

.sprite {
  position: absolute;
  width: 0;
  height: 0;
}

.icon {
  display: block;
  flex-shrink: 0;
  overflow: visible;
}

/* header */
.header {
  height: 11.5rem;
  padding-top: 2.975rem;
  border-radius: 1.5rem;
  background: #00bcd8;
  color: #fff;
  text-align: center;
}

.header h1 {
  display: flex;
  justify-content: center;
  align-items: center;
  gap: 1.6rem;
  height: 5rem;
  font-size: 3.8rem;
  font-weight: 400;
  line-height: 5rem;
  letter-spacing: -0.03em;
  text-shadow: 0.2rem 0.2rem 0.4rem rgba(0, 0, 0, 0.2);
}

.icon-title {
  width: 4.3rem;
  height: 4.3rem;
  filter: drop-shadow(0.2rem 0.2rem 0.2rem rgba(0, 0, 0, 0.2));
}

.header p {
  margin-top: 0.45rem;
  font-size: 2.2rem;
  line-height: 3rem;
  opacity: 0.95;
}

/* student info */
.student-info {
  display: flex;
  align-items: center;
  height: 6rem;
  margin-top: 0.5rem;
  padding: 0 0.55rem 0 0.5rem;
  border: 0.3rem solid #667eea;
  border-radius: 1.2rem;
  background: linear-gradient(135deg, #e8e4ff, #f5e6ff);
}

.info-item {
  display: flex;
  align-items: center;
}

.info-class {
  margin-left: 7.25rem;
}

.info-date {
  margin-left: auto;
}

.student-info label {
  display: flex;
  align-items: center;
  gap: 0.75rem;
  padding-left: 0.25rem;
  color: #764ba2;
  font-size: 2.05rem;
  font-weight: 700;
}

.student-info label span {
  margin-top: 1.85rem;
  line-height: 3rem;
  white-space: nowrap;
}

.label-name {
  width: 13.5rem;
}

.label-class {
  width: 8.3rem;
}

.label-date {
  width: 17.1rem;
}

.icon-label {
  width: 2.2rem;
  height: 2.2rem;
  margin-top: 1.95rem;
}

.icon-person {
  width: 1.85rem;
  height: 2.25rem;
}

.student-info input {
  height: 4.4rem;
  padding-top: 0.6rem;
  border: 0.2rem solid #667eea;
  border-radius: 1rem;
  background: #fff;
  color: #000;
  font-family: "Liberation Sans", Arial, sans-serif;
  font-size: 2rem;
  text-align: center;
}

.student-info .input-name {
  width: 29.9rem;
}

.student-info .input-class {
  width: 15rem;
}

.student-info .input-date {
  width: 31.5rem;
}

/* score */
.score-box {
  height: 14rem;
  margin-top: 0.5rem;
  padding-top: 2.55rem;
  border: 0.3rem solid #f5576c;
  border-radius: 1.5rem;
  background: linear-gradient(135deg, #e8e4ff, #ffecd2);
  text-align: center;
}

.score-box h2 {
  display: flex;
  justify-content: center;
  align-items: center;
  gap: 1.2rem;
  height: 4rem;
  color: #f5576c;
  font-size: 2.9rem;
  font-weight: 400;
  line-height: 4rem;
}

.icon-star {
  width: 3.5rem;
  height: 3.5rem;
}

.score {
  margin-top: 1.85rem;
  color: #f00;
  font-size: 4.65rem;
  font-weight: 700;
  line-height: 6rem;
}

/* questions */
.questions {
  display: grid;
  grid-template-columns: repeat(2, minmax(0, 1fr));
  gap: 2rem;
  margin-top: 0.5rem;
}

.question {
  padding: 1rem;
  border: 0.3rem solid #667eea;
  border-radius: 1.5rem;
  background: linear-gradient(135deg, #fff9f0, #f3edf9 50%, #e8e4ff);
}

.question-number {
  display: flex;
  align-items: center;
  gap: 1.52rem;
  height: 6.06rem;
  padding: 2.2rem 0 0 0.45rem;
  color: #764ba2;
  font-size: 2.35rem;
  font-weight: 700;
  line-height: 3rem;
}

.question-number span {
  margin-bottom: 0.88rem;
}

.icon-q {
  width: 3.8rem;
  height: 3.8rem;
}

.q-recycle {
  margin-right: -0.37rem;
}

.q-shield {
  margin-right: -0.95rem;
}

.icon-keyboard {
  width: 3.15rem;
  height: 2.5rem;
  margin-left: -0.1rem;
  margin-right: -0.1rem;
  margin-top: 0.2rem;
  fill: #764ba2;
}

/* text sits low in its line, right on the first option */
.question-text {
  margin: 0.54rem 0 -0.54rem;
  color: #2d3436;
  font-size: 2.2rem;
  font-weight: 700;
  line-height: 3.575rem;
  white-space: nowrap;
}

.option {
  display: flex;
  align-items: center;
  height: 5.8rem;
  margin-bottom: 1.2rem;
  padding-left: 0.85rem;
  border: 0.3rem solid #667eea;
  border-radius: 1.2rem;
  background: #fff;
  font-size: 2.2rem;
  line-height: 3.3rem;
  white-space: nowrap;
}

.option:last-child {
  margin-bottom: 0;
}

.option span {
  margin-top: 2.02rem;
}

.option.two-line {
  height: 8.19rem;
}

.option.correct {
  border-color: #00b894;
  background: #55efc4;
  color: #00b894;
  font-weight: 700;
}

.icon-o {
  width: 3.15rem;
  height: 3.15rem;
  margin-top: 2.6rem;
  margin-right: 1.55rem;
  fill: #000;
}

.icon-o.mid {
  margin-right: 1.38rem;
}

.icon-o.narrow {
  margin-right: 1.22rem;
}

.icon-o.icon-space {
  height: 3.54rem;
  margin-top: 2.99rem;
  margin-left: -0.35rem;
}

/* result */
.result {
  display: flex;
  flex-direction: column;
  margin-top: 0.5rem;
  padding: 2.9rem 0.5rem 0.5rem;
  border: 0.4rem solid #f5576c;
  border-radius: 2rem;
  background: linear-gradient(135deg, #e8e4ff, #ffecd2);
}

.result h2 {
  display: flex;
  justify-content: center;
  align-items: center;
  gap: 1.6rem;
  height: 4.5rem;
  margin-bottom: -0.5rem;
  color: #f5576c;
  font-size: 3.55rem;
  font-weight: 400;
  line-height: 4.5rem;
}

.icon-popper {
  width: 4.1rem;
  height: 4.1rem;
}

.stats {
  display: grid;
  grid-template-columns: repeat(4, 1fr);
  gap: 1.6rem;
}

.stat {
  display: flex;
  flex-direction: column;
  align-items: center;
  height: 16.3rem;
  padding-top: 3.55rem;
  border: 0.3rem solid #667eea;
  border-radius: 1.5rem;
  background: #fff;
}

.icon-stat {
  width: 4.5rem;
  height: 4.5rem;
}

.stat-label {
  margin-top: 0.24rem;
  color: #636e72;
  font-size: 1.6rem;
  line-height: 2.5rem;
}

.stat-value {
  margin-top: 1.45rem;
  color: #f5576c;
  font-size: 3.2rem;
  font-weight: 700;
  line-height: 4rem;
}

.message {
  display: flex;
  flex-direction: column;
  align-items: center;
  height: 14.2rem;
  margin-top: 2rem;
  padding-top: 4.2rem;
  border: 0.3rem solid #fdcb6e;
  border-radius: 1.5rem;
  background: #fff;
}

.icon-trophy {
  width: 5.8rem;
  height: 5.8rem;
}

.message p {
  display: flex;
  align-items: center;
  gap: 0.55rem;
  margin-top: 0.55rem;
  color: #e17055;
  font-size: 2.32rem;
  font-weight: 700;
  line-height: 3.5rem;
}

.icon-msg {
  width: 2.7rem;
  height: 2.7rem;
}
```
